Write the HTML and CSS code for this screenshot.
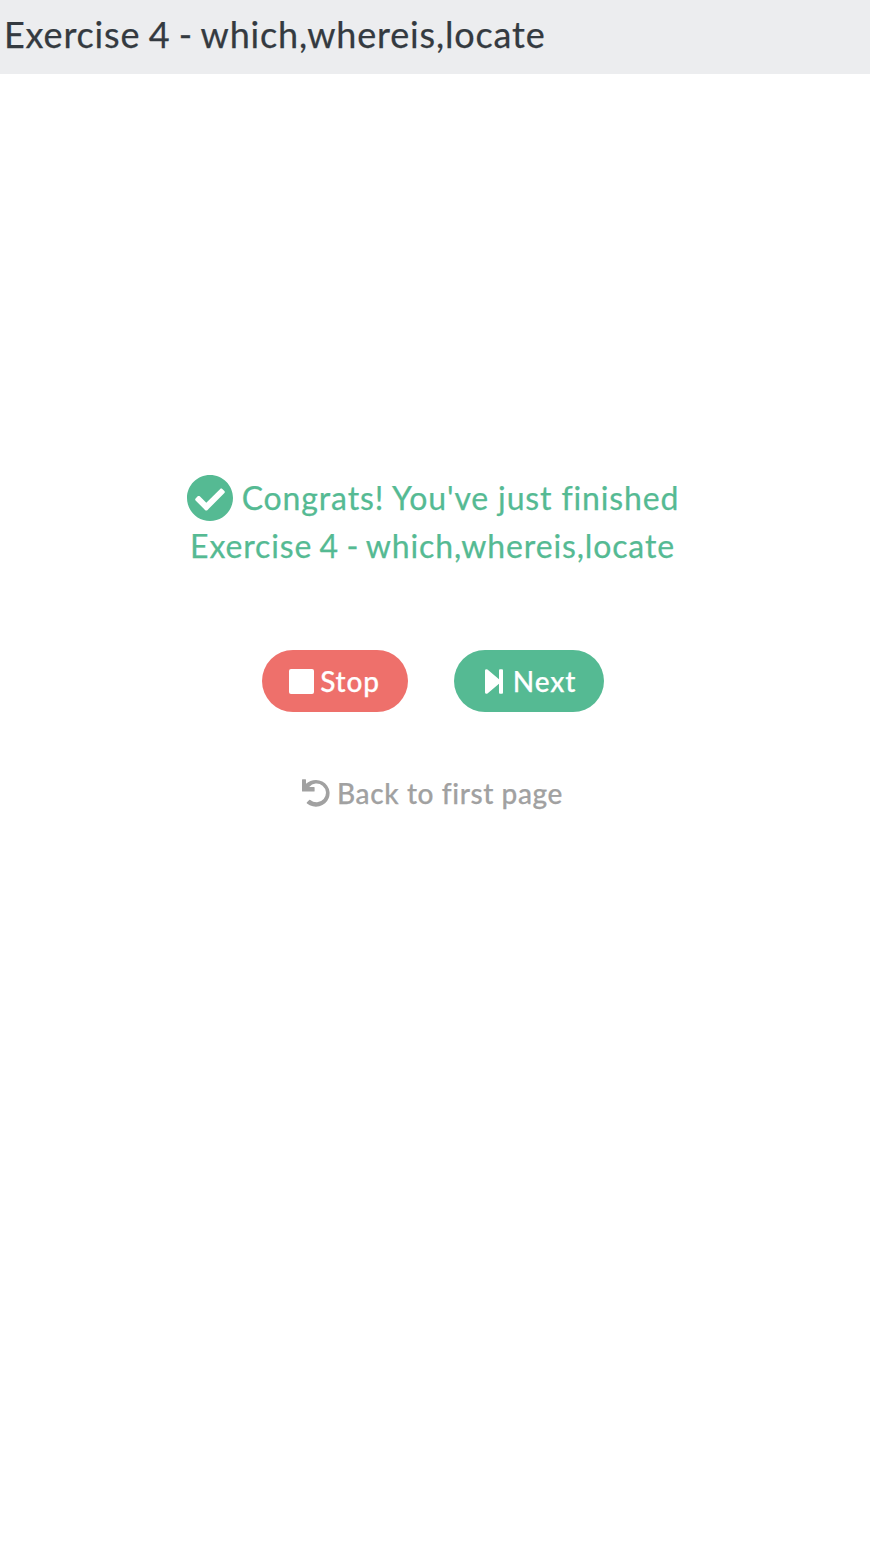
FILE: index.html
```
<!DOCTYPE html>
<html lang="en">
<head>
<meta charset="utf-8">
<title>Exercise 4</title>
<link rel="stylesheet" href="styles.css">
</head>
<body>
<header class="header">Exercise 4 - which,whereis,locate</header>
<main class="finish">
  <div class="message">
    <div class="line congrats">
      <svg class="check" viewBox="8 8 496 496"><path fill="currentColor" d="M504 256c0 136.967-111.033 248-248 248S8 392.967 8 256 119.033 8 256 8s248 111.033 248 248zM227.314 387.314l184-184c6.248-6.248 6.248-16.379 0-22.627l-22.627-22.627c-6.248-6.249-16.379-6.249-22.628 0L216 308.118l-70.059-70.059c-6.248-6.248-16.379-6.248-22.628 0l-22.627 22.627c-6.248 6.248-6.248 16.379 0 22.627l104 104c6.249 6.249 16.379 6.249 22.628.001z"/></svg>
      <span class="congrats-text">Congrats! You've just finished</span>
    </div>
    <div class="line exercise">Exercise 4 - which,whereis,locate</div>
  </div>
  <div class="actions">
    <button class="button stop"><svg class="stop-icon" viewBox="0 0 25 25"><rect width="25" height="25" rx="2" fill="currentColor"/></svg><span>Stop</span></button>
    <button class="button next"><svg class="next-icon" viewBox="0 0 18 25"><path fill="currentColor" d="M0 1.500Q.3-.5 2.500.5L14 10.200V1.500Q14 .3 15 .3H17Q18 .3 18 1.500V23.500Q18 24.700 17 24.700H15Q14 24.700 14 23.500V14.800L2.500 24.500Q.3 25.500 0 23.500Z"/></svg><span>Next</span></button>
  </div>
  <a class="back"><svg class="undo" viewBox="0 0 28 28"><path fill="currentColor" d="M0 .8Q0 .2.600.2H3.400Q4 .2 4 .8V4.800Q8 .9 14 .9A13.700 13.400 0 1 1 5 24.500Q4.400 23.900 5 23.300L7.200 20.900Q7.700 20.400 8.300 20.900A9.400 9.400 0 1 0 7.200 8H12Q12.600 8 12.600 8.600V12Q12.600 12.600 12 12.600H.6Q0 12.600 0 12Z"/></svg><span>Back to first page</span></a>
</main>
</body>
</html>
```
FILE: styles.css
```
body { margin: 0; min-height: 1556px; background: #fff; font-family: Lato, sans-serif; -webkit-text-stroke: .25px currentColor; }
.header { box-sizing: border-box; height: 74px; padding-left: 4px; background: #ecedef; color: #343a40; font-size: 36px; line-height: 69px; letter-spacing: .83px; word-spacing: -1.7px; white-space: nowrap; }
.finish { display: flex; flex-direction: column; align-items: center; padding: 400px 5px 0 0; }
.message { color: #55ba93; font-size: 32px; line-height: 48px; letter-spacing: .86px; white-space: nowrap; }
.congrats { padding-left: 1px; }
.exercise { word-spacing: -1.7px; }
.line { display: flex; justify-content: center; align-items: center; height: 48px; }
.check { width: 46px; height: 46px; margin-right: 9px; }
.actions { display: flex; gap: 46px; margin-top: 80px; }
.button { display: flex; align-items: center; justify-content: center; height: 62px; padding: 0; border: 0; border-radius: 31px; color: #fff; font: 500 28px/60px Lato, sans-serif; letter-spacing: .85px; -webkit-text-stroke: .25px currentColor; }
.stop { width: 146px; background: #ee706b; }
.next { width: 150px; box-sizing: border-box; padding-left: 4px; background: #55ba93; }
.stop-icon { width: 25px; height: 25px; margin-right: 6px; }
.next-icon { width: 18px; height: 25px; margin-right: 10px; }
.back { display: flex; align-items: center; height: 40px; margin-top: 61px; color: #a1a1a1; font-size: 28px; font-weight: 500; letter-spacing: .6px; white-space: nowrap; }
.undo { width: 28px; height: 28px; margin-right: 7px; }
```
